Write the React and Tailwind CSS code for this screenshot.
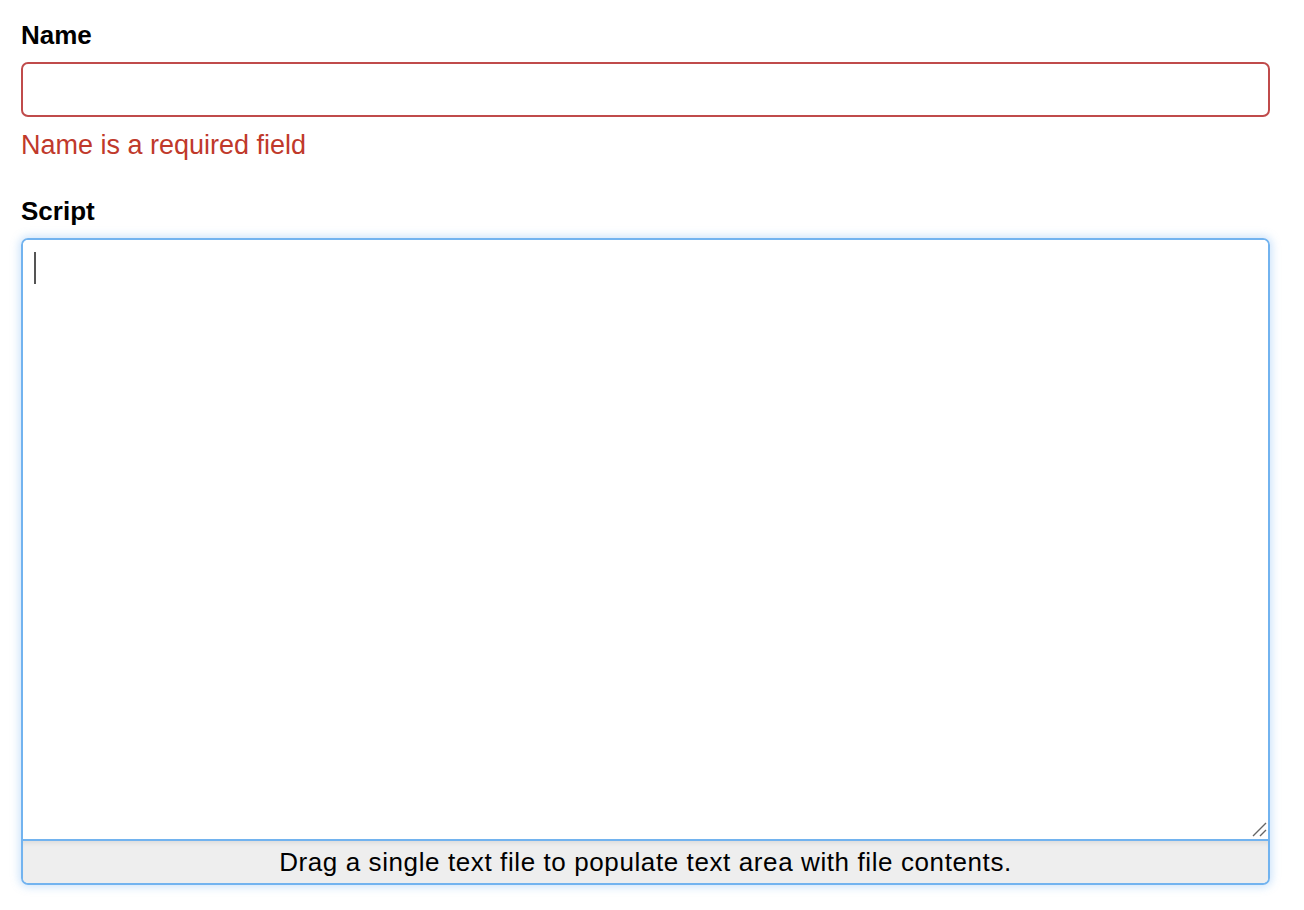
import React from "react";

function App() {
  return (
    <div
      className="min-h-screen bg-white pl-[21px] pr-[34px] pt-[21px] text-black"
      style={{ fontFamily: '"Liberation Sans", Arial, sans-serif' }}
    >
      <label className="block text-[26px] font-bold leading-[28px]">Name</label>
      <input
        type="text"
        className="mt-[13px] block h-[55px] w-full rounded-[7px] border-2 border-[#c04b4b] bg-white px-3 text-[24px] outline-none"
      />
      <p className="mt-[12px] text-[27px] leading-[32px] text-[#c0392b]">
        Name is a required field
      </p>

      <label className="mt-[36px] block text-[26px] font-bold leading-[28px]">
        Script
      </label>
      <div className="relative mt-[13px] overflow-hidden rounded-[7px] border-2 border-[#72b3ef] shadow-[0_0_9px_2px_rgba(110,175,240,0.35)]">
        <div className="relative">
          <textarea className="block h-[599px] w-full resize-none bg-white px-3 py-3 text-[24px] outline-none" />
          <span className="pointer-events-none absolute left-[11px] top-[12px] h-[32px] w-[2px] bg-[#555]" />
          <svg
            className="pointer-events-none absolute bottom-[2px] right-[1px]"
            width="16"
            height="16"
            viewBox="0 0 16 16"
          >
            <path d="M2 15 L15 2 M9 15 L15 9" stroke="#666" strokeWidth="1.4" fill="none" />
          </svg>
        </div>
        <div className="flex h-[44px] items-center justify-center border-t-2 border-[#72b3ef] bg-[#eeeeee] shadow-[inset_0_5px_5px_-3px_rgba(0,0,0,0.08)] text-[26px] tracking-[0.6px]">
          Drag a single text file to populate text area with file contents.
        </div>
      </div>
    </div>
  );
}

export default App;
